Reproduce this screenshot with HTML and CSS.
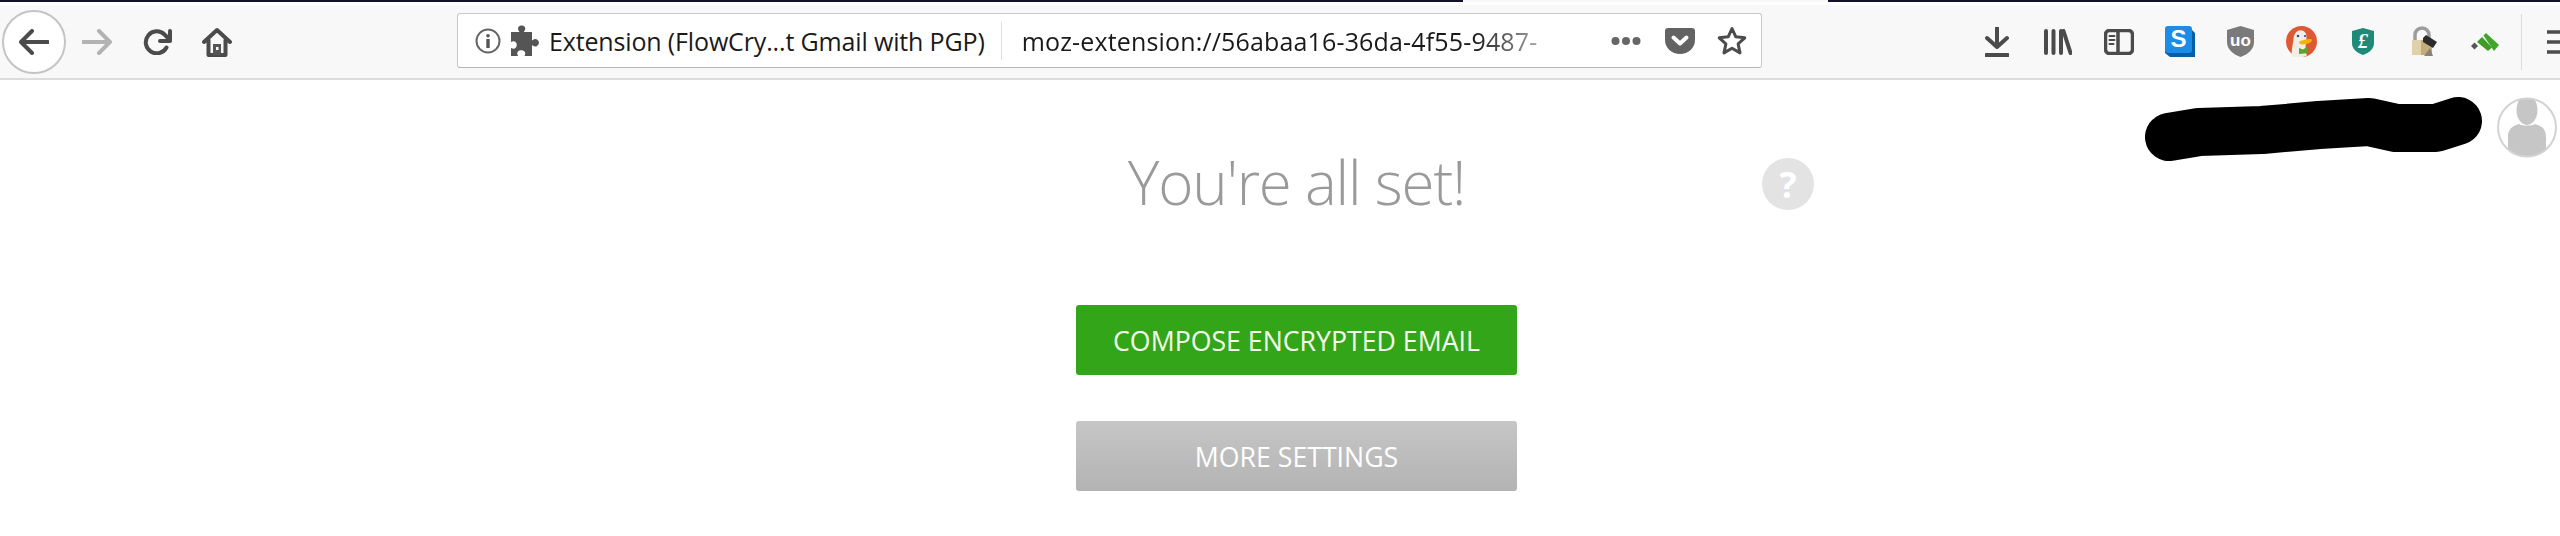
FILE: index.html
```html
<!DOCTYPE html>
<html lang="en">
<head>
<meta charset="utf-8">
<title>You're all set!</title>
<link rel="stylesheet" href="styles.css">
</head>
<body>
<header class="chrome">
  <div class="tabstrip"></div>
  <div class="toolbar">
    <button class="back" aria-label="Back">
      <svg width="30" height="26" viewBox="0 0 30 26"><path class="stroke" d="M13 2 2 13l11 11M2 13h27"/></svg>
    </button>
    <span class="slot">
      <svg class="muted" width="30" height="26" viewBox="0 0 30 26"><path class="stroke" d="M17 2l11 11-11 11M28 13H1"/></svg>
    </span>
    <span class="slot">
      <svg width="29" height="26" viewBox="0 0 29 26"><path class="stroke" d="M23.500 18.500A11 11 0 1 1 21.500 5.500L26 10"/><path class="stroke" d="M27 2v10H17"/></svg>
    </span>
    <span class="slot">
      <svg width="30" height="30" viewBox="0 0 30 30"><path class="stroke" d="M2 15 15 3l13 12M6.500 13v15h17V13"/><path class="fill" d="M11 17h8v11h-8z"/><path class="hole" d="M14 20h2.500v3H14z"/></svg>
    </span>

    <div class="urlbar">
      <svg class="info" width="26" height="26" viewBox="0 0 26 26"><circle cx="13" cy="13" r="11.500" fill="none" stroke="#666" stroke-width="2"/><circle cx="13" cy="7.800" r="1.800" fill="#555"/><path d="M11.300 11h3.400v9h-3.400z" fill="#555"/></svg>
      <svg class="puzzle" width="30" height="32" viewBox="0 0 30 32"><path class="fill" d="M1 7h8.500C8 5 7.500 3.600 8.500 2c1.300-2 5-2 6.300 0 1 1.600.5 3-1 5H22v8.500c2-1.500 3.500-2 5-1 2.600 1.600 2.600 5 0 6.500-1.500 1-3 .5-5-1V31h-7.500c1-2 1-3.500 0-4.500-1.800-1.800-5-1.800-6.500 0-1 1-1 2.500 0 4.500H1v-8c2 1 3.500 1 4.500 0 1.700-1.700 1.700-4.500 0-6-1-1-2.500-1-4.500 0z"/></svg>
      <span class="identity">Extension (FlowCry...t Gmail with PGP)</span>
      <span class="divider"></span>
      <span class="address">moz-extension://56abaa16-36da-4f55-9487-</span>
      <svg class="dots" width="30" height="10" viewBox="0 0 30 10"><circle cx="4.500" cy="5" r="4" /><circle cx="15" cy="5" r="4"/><circle cx="25.500" cy="5" r="4"/></svg>
      <svg class="pocket" width="30" height="26" viewBox="0 0 30 26"><path d="M3 0h24a3 3 0 0 1 3 3v9a15 14 0 0 1-30 0V3a3 3 0 0 1 3-3z" fill="#636363"/><path d="M8.500 9.500 15 15.500l6.500-6" fill="none" stroke="#fff" stroke-width="4" stroke-linecap="round" stroke-linejoin="round"/></svg>
      <svg class="star" width="30" height="30" viewBox="0 0 30 30"><path d="M15 2.500l3.800 8.300 9 1-6.700 6.100 1.900 9L15 22.300 7 26.900l1.900-9-6.700-6.100 9-1z" fill="none" stroke="#4c4c4c" stroke-width="3" stroke-linejoin="round"/></svg>
    </div>

    <div class="tools">
      <span class="tool"><svg width="24" height="30" viewBox="0 0 24 30"><path class="stroke" d="M12 1v19M2 11l10 9 10-9M1 28h22"/></svg></span>
      <span class="tool"><svg width="28" height="26" viewBox="0 0 28 26"><path class="stroke" d="M2 2v22M9.500 2v22M17 2v22M19.500 2l7 22"/></svg></span>
      <span class="tool"><svg width="30" height="26" viewBox="0 0 30 26"><rect class="stroke thin" x="1.500" y="1.500" width="27" height="23" rx="4"/><path class="stroke thin" d="M14 2v22"/><path class="stroke hair" d="M5.500 7h5M5.500 11h5M5.500 15h4"/></svg></span>
      <span class="tool"><svg width="30" height="31" viewBox="0 0 30 31"><path d="M4 3h22l4 4v24H5l-5-4V4z" fill="#0a5ea8"/><path d="M3 0h21a3 3 0 0 1 3 3v21a3 3 0 0 1-3 3H3a3 3 0 0 1-3-3V3a3 3 0 0 1 3-3z" fill="#1c8ce6"/><text class="glyph-s" x="13.500" y="21">S</text></svg></span>
      <span class="tool"><svg width="27" height="31" viewBox="0 0 27 31"><path d="M13.500 0 27 4v12c0 7-5.500 12-13.500 15C5.500 28 0 23 0 16V4z" fill="#7a7a7a"/><text class="glyph-ub" x="13.500" y="20">uo</text></svg></span>
      <span class="tool"><svg width="31" height="31" viewBox="0 0 31 31"><circle cx="15.500" cy="15.500" r="15.500" fill="#de5833"/><path d="M6 31c-1-7 1-12 1.500-18C8 7 12 3.500 16 4.500c3 .8 4.500 3 4.500 6 0 5-1 8-1 12 0 3 .5 5 1.500 7-4 2-10 3-15 1.500z" fill="#f3ede8"/><circle cx="12" cy="10" r="1.300" fill="#2d4f8e"/><circle cx="19" cy="10" r="1.100" fill="#2d4f8e"/><path d="M14 15c3-1 8-2.500 11-2 1 .6 1 2 0 3-3 2-8 3-11 2-1-1-1-2.200 0-3z" fill="#f5b400"/><path d="M13 22l4 1.500 4-2.500 1.500 6-4 .5L13 28z" fill="#5ba52f"/></svg></span>
      <span class="tool"><svg width="24" height="27" viewBox="0 0 24 27"><path d="M12 0 23 3v12c0 6-4.500 9.500-11 12C5.500 24.500 1 21 1 15V3z" fill="#1f8a78"/><text class="glyph-l" x="12" y="20">£</text></svg></span>
      <span class="tool"><svg width="28" height="31" viewBox="0 0 28 31"><path d="M5 14V9a7 7 0 0 1 14 0v5" fill="none" stroke="#9c9c9c" stroke-width="3.500"/><path d="M2 14h20v15H2z" fill="#c3ad7c"/><path d="M2 14h9v15H2z" fill="#e0d2a8"/><path d="M13 12l3-3 11 7-4 6-10-6z" fill="#2b2b2b"/><path d="M14 30l6-8 3 8z" fill="#8a8275"/></svg></span>
      <span class="tool"><svg width="28" height="18" viewBox="0 0 28 18"><path d="M0 13l3.500-3.500L7 13l-3.500 3.500z" fill="#555"/><path d="M6 9l5-5 10 10.500-4 3.500z" fill="#3f9d26"/><path d="M12.500 2.500 15 0l13 12-5 6z" fill="#3fa629"/></svg></span>
    </div>
    <span class="sep"></span>
    <svg class="menu" width="30" height="24" viewBox="0 0 30 24"><path d="M0 2h30M0 12h30M0 22h30" stroke="#4c4c4c" stroke-width="3.500"/></svg>
  </div>
</header>

<main class="page">
  <section class="setup">
    <div class="title-row">
      <h1>You're all set!</h1>
      <span class="help">?</span>
    </div>
    <button class="action primary">COMPOSE ENCRYPTED EMAIL</button>
    <button class="action secondary">MORE SETTINGS</button>
  </section>
  <aside class="user">
    <svg class="scribble" width="338" height="66" viewBox="26 15 338 66"><path d="M50 55 80 50 143 48 200 43 250 40 277 46 317 46 339 39" fill="none" stroke="#000" stroke-width="48" stroke-linecap="round" stroke-linejoin="round"/></svg>
    <svg class="avatar" width="60" height="61" viewBox="0 0 60 61"><defs><clipPath id="c"><circle cx="30" cy="30.500" r="29"/></clipPath></defs><circle cx="30" cy="30.500" r="29" fill="#fff"/><g clip-path="url(#c)" fill="#c6c6c6"><ellipse cx="30" cy="13" rx="10.500" ry="15"/><path d="M11 61V40c0-8 4-11 11-13 3 2 13 2 16 0 7 2 11 5 11 13v21z"/></g><circle cx="30" cy="30.500" r="29" fill="none" stroke="#d2d2d2" stroke-width="2"/></svg>
  </aside>
</main>
</body>
</html>
```

FILE: styles.css
```css
* { box-sizing: border-box; }
html, body { margin: 0; padding: 0; }
body {
  width: 2560px;
  height: 536px;
  overflow: hidden;
  background: #fff;
  font-family: "Open Sans", "Noto Sans", sans-serif;
}

.chrome { height: 80px; background: #f8f8f8; border-bottom: 2px solid #dcdcdc; overflow: hidden; }
.tabstrip {
  height: 5px;
  background-color: #fff;
  background-image: linear-gradient(to right, #12112a 0 1463px, #f8f8f8 1463px 1828px, #12112a 1828px);
  background-size: 100% 2px;
  background-repeat: no-repeat;
}
.toolbar { height: 73px; display: flex; align-items: center; padding-left: 2px; }

.stroke { fill: none; stroke: #4b4b4b; stroke-width: 4; stroke-linecap: round; stroke-linejoin: round; }
.stroke.thin { stroke-width: 3.500; }
.stroke.hair { stroke-width: 2; }
.fill { fill: #555; }
.hole { fill: #f8f8f8; }
.muted .stroke { stroke: #b3b3b3; }

.back {
  width: 64px; height: 64px; flex: none;
  margin: 0; padding: 0;
  display: flex; align-items: center; justify-content: center;
  background: #fff;
  border: 2px solid #c4c4c4;
  border-radius: 50%;
}
.slot { width: 60px; height: 32px; flex: none; display: flex; align-items: center; justify-content: center; margin-left: 1px; margin-right: -1px; }

.urlbar {
  width: 1305px; height: 55px; flex: none;
  margin-left: 211px;
  margin-top: -2px;
  display: flex; align-items: center;
  padding-left: 17px;
  padding-right: 14px;
  background: #fff;
  border: 1px solid #c9c9c9;
  border-bottom-color: #b5b5b5;
  border-radius: 3px;
  color: #1a1a1a;
}
.puzzle { margin-left: 9px; flex: none; }
.info { flex: none; }
.identity { margin-left: 9px; font-size: 25px; letter-spacing: -0.15px; white-space: nowrap; }
.divider { width: 1px; height: 38px; margin-left: 16px; background: #dedede; flex: none; }
.address {
  margin-left: 20px;
  font-size: 25px;
  letter-spacing: 0.16px;
  white-space: nowrap;
  -webkit-mask-image: linear-gradient(to right, #000 88%, transparent 108%);
  mask-image: linear-gradient(to right, #000 88%, transparent 108%);
}
.dots { margin-left: auto; fill: #666; flex: none; }
.pocket { margin-left: 24px; flex: none; }
.star { margin-left: 22px; flex: none; }

.tools { display: flex; margin-left: 204px; flex: none; }
.tool { width: 61px; height: 32px; display: flex; align-items: center; justify-content: center; }
.sep { width: 1px; height: 56px; margin-left: 6px; background: #dcdcdc; flex: none; }
.menu { margin-left: 25px; flex: none; }

.glyph-s { font: 900 24px "Liberation Sans", sans-serif; fill: #fff; text-anchor: middle; }
.glyph-ub { font: 700 17px "Liberation Sans", sans-serif; fill: #fff; text-anchor: middle; }
.glyph-l { font: italic 700 20px "Liberation Serif", serif; fill: #fff; text-anchor: middle; }

.page { display: flex; align-items: flex-start; }
.setup { width: 441px; margin-left: 1076px; flex: none; display: flex; flex-direction: column; }
.title-row { display: flex; align-items: center; height: 104px; margin-top: 52px; }
h1 {
  width: 441px; flex: none; margin: -5px 0 0;
  text-align: center;
  font-weight: 300;
  font-size: 60px;
  letter-spacing: -1.2px;
  line-height: 82px;
  color: #9a9a9a;
}
.help {
  width: 52px; height: 52px; flex: none;
  margin-left: 245px;
  display: flex; align-items: center; justify-content: center;
  border-radius: 50%;
  background: #e3e3e3;
  color: #fff;
  font-size: 36px;
  font-weight: 700;
}
.action {
  width: 441px; height: 70px;
  margin: 0; padding: 0;
  border-radius: 3px;
  border: 0;
  color: #fff;
  font-family: inherit;
  font-size: 26.7px;
}
.primary { margin-top: 69px; background: #32a518; color: #f2ffe9; }
.secondary { margin-top: 46px; background: linear-gradient(#c6c6c6, #b3b3b3); }

.user { display: flex; align-items: flex-start; margin-left: auto; margin-top: 17px; margin-right: 3px; }
.scribble { display: block; margin-right: 14px; }
.avatar { display: block; flex: none; }
```
